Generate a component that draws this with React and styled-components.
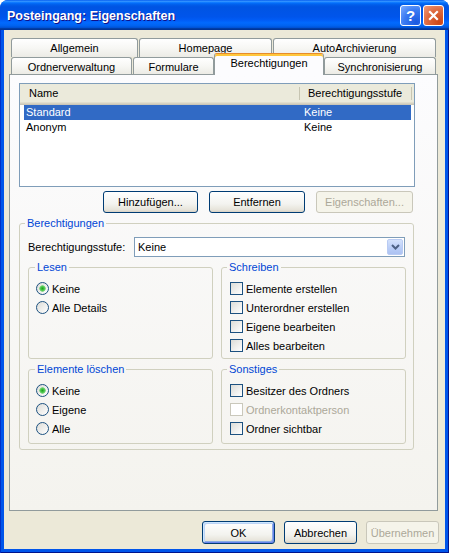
import styled, { createGlobalStyle } from 'styled-components';

const GlobalStyle = createGlobalStyle`
  html, body {
    margin: 0;
    padding: 0;
    background: #ffffff;
  }
  body {
    font-family: "Liberation Sans", Arial, sans-serif;
    font-size: 11px;
    color: #000;
  }
  * { box-sizing: border-box; }
`;

const topTabs = [
  { label: 'Allgemein', w: 127 },
  { label: 'Homepage', w: 133 },
  { label: 'AutoArchivierung', w: 163 },
];

const bottomTabs = [
  { label: 'Ordnerverwaltung', w: 121 },
  { label: 'Formulare', w: 81 },
  { label: 'Berechtigungen', w: 110, active: true },
  { label: 'Synchronisierung', w: 112 },
];

const users = [
  { name: 'Standard', level: 'Keine', selected: true },
  { name: 'Anonym', level: 'Keine' },
];

export default function App() {
  return (
    <>
      <GlobalStyle />
      <Window>
        <TitleBar>
          <Title>Posteingang: Eigenschaften</Title>
          <CaptionButton $kind="help">?</CaptionButton>
          <CaptionButton $kind="close">
            <svg width="13" height="13" viewBox="0 0 13 13">
              <path d="M3 3 L10 10 M10 3 L3 10" stroke="#fff" strokeWidth="2.2" strokeLinecap="square" />
            </svg>
          </CaptionButton>
        </TitleBar>

        <Frame>
          <Client>
            <TabStrip>
              <TabRow $h={19}>
                {topTabs.map(t => (
                  <Tab key={t.label} $w={t.w} $back>{t.label}</Tab>
                ))}
              </TabRow>
              <TabRow $h={17}>
                {bottomTabs.map(t => (
                  <Tab key={t.label} $w={t.w} $active={t.active}>{t.label}</Tab>
                ))}
              </TabRow>
            </TabStrip>

            <Panel>
              <ListView>
                <ListHeader>
                  <HeaderCell $pl={9}>Name</HeaderCell>
                  <HeaderCell $pl={8}>Berechtigungsstufe</HeaderCell>
                </ListHeader>
                {users.map(u => (
                  <ListRow key={u.name} $selected={u.selected}>
                    <Cell $pl={2}>{u.name}</Cell>
                    <Cell $pl={5}>{u.level}</Cell>
                  </ListRow>
                ))}
              </ListView>

              <ButtonRow>
                <Button $w={95} $h={22}>Hinzufügen...</Button>
                <Button $w={96} $h={22}>Entfernen</Button>
                <Button $w={97} $h={22} disabled>Eigenschaften...</Button>
              </ButtonRow>

              <OuterGroup>
                <Legend $shift={-3}>Berechtigungen</Legend>
                <LevelRow>
                  <LevelLabel>Berechtigungsstufe:</LevelLabel>
                  <Select>
                    <span>Keine</span>
                    <DropButton>
                      <svg width="9" height="6" viewBox="0 0 9 6">
                        <path d="M1 1 L4.5 4.5 L8 1" stroke="#4D6185" strokeWidth="2" fill="none" />
                      </svg>
                    </DropButton>
                  </Select>
                </LevelRow>

                <GroupGrid>
                  <Group $pad="5px 6px 3px 7px">
                    <Legend $shift={-1}>Lesen</Legend>
                    <Option><Radio $checked />Keine</Option>
                    <Option><Radio />Alle Details</Option>
                  </Group>
                  <Group $pad="5px 6px 3px 8px">
                    <Legend $shift={-3}>Schreiben</Legend>
                    <Option><Check />Elemente erstellen</Option>
                    <Option><Check />Unterordner erstellen</Option>
                    <Option><Check />Eigene bearbeiten</Option>
                    <Option><Check />Alles bearbeiten</Option>
                  </Group>
                  <Group $pad="5px 6px 5px 7px">
                    <Legend $shift={-1}>Elemente löschen</Legend>
                    <Option><Radio $checked />Keine</Option>
                    <Option><Radio />Eigene</Option>
                    <Option><Radio />Alle</Option>
                  </Group>
                  <Group $pad="5px 6px 5px 8px">
                    <Legend $shift={-3}>Sonstiges</Legend>
                    <Option><Check />Besitzer des Ordners</Option>
                    <Option $disabled><Check $disabled />Ordnerkontaktperson</Option>
                    <Option><Check />Ordner sichtbar</Option>
                  </Group>
                </GroupGrid>
              </OuterGroup>
            </Panel>

            <Footer>
              <Button $w={73} $h={23} $default>OK</Button>
              <Button $w={73} $h={23}>Abbrechen</Button>
              <Button $w={73} $h={23} disabled>Übernehmen</Button>
            </Footer>
          </Client>
        </Frame>
      </Window>
    </>
  );
}

const Window = styled.div`
  width: 449px;
  height: 553px;
  display: flex;
  flex-direction: column;
  border-radius: 8px 8px 0 0;
  overflow: hidden;
  background: #0055EA;
`;

const TitleBar = styled.div`
  height: 30px;
  flex: none;
  display: flex;
  align-items: center;
  gap: 2px;
  padding: 1px 5px 0 7px;
  background: linear-gradient(to bottom,
    #0058EE 0%, #3593FF 4%, #288EFF 6%, #127DFF 8%, #036FFC 10%,
    #0262EE 14%, #0057E5 20%, #0054E3 24%, #0055EB 56%, #005BF5 66%,
    #026AFE 76%, #0062EF 86%, #0052D6 92%, #0040AB 94%, #003092 100%);
`;

const Title = styled.div`
  flex: 1;
  color: #fff;
  font-family: "Liberation Sans", Arial, sans-serif;
  font-weight: 700;
  font-size: 12.5px;
  text-shadow: 1px 1px #0F1089;
`;

const CaptionButton = styled.div`
  width: 21px;
  height: 21px;
  display: grid;
  place-items: center;
  border: 1px solid #fff;
  border-radius: 3px;
  color: #fff;
  font-family: "Liberation Sans", Arial, sans-serif;
  font-weight: 700;
  font-size: 15px;
  background: ${p => p.$kind === 'close'
    ? 'radial-gradient(circle at 80% 85%, #CC4615 0%, #DE6A3F 55%, #F09B7C 100%)'
    : 'radial-gradient(circle at 80% 85%, #1A58E0 0%, #3B7BF2 55%, #7FAEFF 100%)'};
`;

const Frame = styled.div`
  flex: 1;
  display: flex;
  padding: 0 4px 4px 4px;
  background: #0055EA;
  box-shadow: inset 1px 0 #0030C8, inset -1px 0 #00138C, inset 0 -1px #00138C;
`;

const Client = styled.div`
  flex: 1;
  display: flex;
  flex-direction: column;
  background: #ECE9D8;
  padding: 8px 7px 5px 5px;
`;

const TabStrip = styled.div`
  padding-left: 2px;
`;

const TabRow = styled.div`
  display: flex;
  align-items: flex-end;
  gap: 1px;
  height: ${p => p.$h}px;
`;

const Tab = styled.div`
  width: ${p => p.$w}px;
  height: ${p => (p.$active ? '22px' : '100%')};
  flex: none;
  display: flex;
  align-items: center;
  justify-content: center;
  border: 1px solid #919B9C;
  border-bottom: none;
  border-radius: 3px 3px 0 0;
  padding-top: ${p => (p.$active || p.$back ? '0' : '1px')};
  padding-bottom: ${p => (p.$active ? '3px' : p.$back ? '1px' : '0')};
  background: ${p => (p.$active
    ? '#FCFCFE'
    : 'linear-gradient(to bottom, #FFFFFF, #F7F7F4 50%, #ECEBE5)')};
  ${p => p.$active && `
    position: relative;
    z-index: 1;
    margin: 0 -1px -1px;
    border-top-color: #E68B2C;
    box-shadow: inset 0 2px #FFC73C;
  `}
`;

const Panel = styled.div`
  width: 429px;
  height: 437px;
  flex: none;
  display: flex;
  flex-direction: column;
  border: 1px solid #919B9C;
  padding: 8px 22px 0 9px;
  background: linear-gradient(to bottom, #FCFCFE, #F4F3EE);
`;

const ListView = styled.div`
  width: 396px;
  height: 104px;
  border: 1px solid #7F9DB9;
  background: #fff;
`;

const ListHeader = styled.div`
  display: grid;
  grid-template-columns: 280px 112px;
  height: 21px;
  background: #EBEADB;
  box-shadow: inset 0 -1px #CBC7B8, inset 0 -2px #D6D2C2, inset 0 -3px #E2DECD;
`;

const HeaderCell = styled.div`
  position: relative;
  padding-left: ${p => p.$pl}px;
  line-height: 19px;
  &::after {
    content: '';
    position: absolute;
    right: 0;
    top: 3px;
    bottom: 5px;
    width: 1px;
    background: #C7C5B2;
  }
`;

const ListRow = styled.div`
  display: grid;
  grid-template-columns: 275px 1fr;
  width: 387px;
  height: 15px;
  margin-left: 4px;
  background: ${p => (p.$selected ? '#316AC5' : 'transparent')};
  color: ${p => (p.$selected ? '#fff' : '#000')};
`;

const Cell = styled.div`
  padding-left: ${p => p.$pl}px;
  line-height: 15px;
  white-space: nowrap;
`;

const ButtonRow = styled.div`
  display: flex;
  justify-content: flex-end;
  gap: 11px;
  margin-top: 4px;
  padding-right: 2px;
`;

const Button = styled.button`
  width: ${p => p.$w}px;
  height: ${p => p.$h}px;
  padding: 0;
  font-family: "Liberation Sans", Arial, sans-serif;
  font-size: 11px;
  color: #000;
  border: 1px solid #003C74;
  border-radius: 3px;
  background: linear-gradient(to bottom, #FFFFFF, #F3F3EF 60%, #E6E3D9 90%, #D6D0C5);
  ${p => p.$default && `
    box-shadow: inset 1px 1px #CEE7FF, inset -1px -1px #6982EE,
      inset 2px 2px #BCD4F6, inset -2px -2px #89ADE4;
  `}
  &:disabled {
    color: #ACA899;
    border-color: #C9C7BA;
    background: #F5F4EA;
  }
`;

const Group = styled.fieldset`
  margin: 0;
  min-width: 0;
  border: 1px solid #D0D0BF;
  border-radius: 3px;
  padding: ${p => p.$pad};
`;

const OuterGroup = styled(Group)`
  width: 395px;
  margin-top: 3px;
  padding: 7px 7px 5px 8px;
`;

const Legend = styled.legend`
  color: #0046D5;
  padding: 0 2px;
  margin-left: ${p => p.$shift}px;
  line-height: 14px;
  font-size: 11px;
`;

const LevelRow = styled.div`
  display: flex;
  align-items: center;
  height: 20px;
`;

const LevelLabel = styled.div`
  width: 106px;
`;

const Select = styled.div`
  width: 271px;
  height: 20px;
  display: flex;
  align-items: center;
  justify-content: space-between;
  border: 1px solid #7F9DB9;
  background: #fff;
  padding: 0 1px 0 3px;
`;

const DropButton = styled.div`
  width: 16px;
  height: 16px;
  display: grid;
  place-items: center;
  border-radius: 2px;
  border: 1px solid #B9CBF3;
  background: linear-gradient(to bottom, #D4E2FC, #B9CDF7 60%, #ADC2F2);
`;

const GroupGrid = styled.div`
  display: grid;
  grid-template-columns: 185px 185px;
  column-gap: 8px;
  row-gap: 3px;
  margin-top: 3px;
`;

const Option = styled.div`
  display: flex;
  align-items: center;
  gap: 3px;
  height: 19px;
  color: ${p => (p.$disabled ? '#ACA899' : '#000')};
`;

const Radio = styled.span`
  width: 13px;
  height: 13px;
  flex: none;
  border-radius: 50%;
  border: 1px solid #1C5180;
  background: ${p => (p.$checked
    ? 'radial-gradient(circle, #21A121 0, #4DC94D 2px, #8ED88E 3px, transparent 3.5px), linear-gradient(135deg, #DCDCD7, #FFFFFF)'
    : 'linear-gradient(135deg, #DCDCD7, #FFFFFF)')};
`;

const Check = styled.span`
  width: 13px;
  height: 13px;
  flex: none;
  border: 1px solid ${p => (p.$disabled ? '#CAC8BB' : '#1C5180')};
  background: ${p => (p.$disabled ? '#FFFFFF' : 'linear-gradient(135deg, #DCDCD7, #FFFFFF)')};
`;

const Footer = styled.div`
  display: flex;
  justify-content: flex-end;
  gap: 9px;
  margin-top: 10px;
  margin-right: -1px;
`;
